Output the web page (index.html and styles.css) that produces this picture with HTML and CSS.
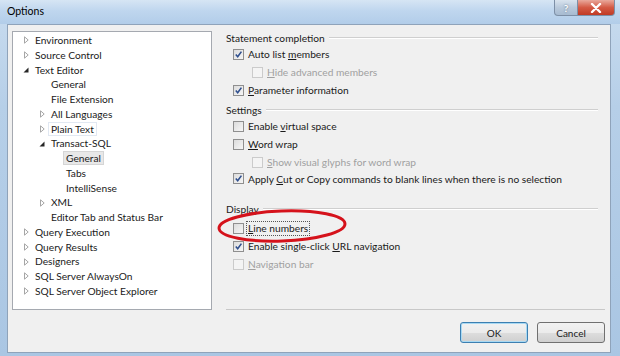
FILE: index.html
```html
<!DOCTYPE html>
<html>
<head>
    <title>Options</title>
    <link rel="stylesheet" href="styles.css">
</head>
<body>
<div class="window">
    <div class="titlebar">
        <span class="title">Options</span>
        <div class="caption-buttons">
            <span class="cap-btn help">?</span>
            <span class="cap-btn close">
                <svg width="12" height="10" viewBox="0 0 12 10"><path d="M2 1 L10 9 M10 1 L2 9" stroke="#fff" stroke-width="2.4" stroke-linecap="round"/></svg>
            </span>
        </div>
    </div>

    <div class="client">
        <div class="tree">
            <div class="node lv0"><span class="tw closed"></span>Environment</div>
            <div class="node lv0"><span class="tw closed"></span>Source Control</div>
            <div class="node lv0"><span class="tw open"></span>Text Editor</div>
            <div class="node lv1"><span class="tw"></span>General</div>
            <div class="node lv1"><span class="tw"></span>File Extension</div>
            <div class="node lv1"><span class="tw closed"></span>All Languages</div>
            <div class="node lv1"><span class="tw closed"></span><span class="label hover">Plain Text</span></div>
            <div class="node lv1"><span class="tw open"></span>Transact-SQL</div>
            <div class="node lv2"><span class="tw"></span><span class="label selected">General</span></div>
            <div class="node lv2"><span class="tw"></span>Tabs</div>
            <div class="node lv2"><span class="tw"></span>IntelliSense</div>
            <div class="node lv1"><span class="tw closed"></span>XML</div>
            <div class="node lv1"><span class="tw"></span>Editor Tab and Status Bar</div>
            <div class="node lv0"><span class="tw closed"></span>Query Execution</div>
            <div class="node lv0"><span class="tw closed"></span>Query Results</div>
            <div class="node lv0"><span class="tw closed"></span>Designers</div>
            <div class="node lv0"><span class="tw closed"></span>SQL Server AlwaysOn</div>
            <div class="node lv0"><span class="tw closed"></span>SQL Server Object Explorer</div>
        </div>

        <div class="panel">
            <div class="group-head">Statement completion</div>
            <div class="check on"><span>Auto list <u>m</u>embers</span></div>
            <div class="check sub disabled"><span><u>H</u>ide advanced members</span></div>
            <div class="check on"><span><u>P</u>arameter information</span></div>

            <div class="group-head second">Settings</div>
            <div class="check"><span>Enable <u>v</u>irtual space</span></div>
            <div class="check"><span><u>W</u>ord wrap</span></div>
            <div class="check sub disabled"><span><u>S</u>how visual glyphs for word wrap</span></div>
            <div class="check on tight"><span>Apply <u>C</u>ut or Copy commands to blank lines when there is no selection</span></div>

            <div class="group-head third">Display</div>
            <div class="check"><span class="focus"><u>L</u>ine numbers</span></div>
            <div class="check on"><span>Enable single-click <u>U</u>RL navigation</span></div>
            <div class="check disabled"><span><u>N</u>avigation bar</span></div>

            <svg class="mark" width="140" height="42" viewBox="0 0 140 42">
                <ellipse cx="69" cy="20" rx="63" ry="15" transform="rotate(-2 69 20)" fill="none" stroke="#d5121b" stroke-width="3"/>
            </svg>
        </div>

        <div class="footer">
            <button class="btn default">OK</button>
            <button class="btn">Cancel</button>
        </div>
    </div>
</div>
</body>
</html>
```

FILE: styles.css
```css
body {
    margin: 0;
    font-family: Lato, "Noto Sans", sans-serif;
    font-size: 10.2px;
    color: #1a1a1a;
}
.window {
    width: 620px;
    height: 356px;
    background: linear-gradient(180deg, #c9dcef 0%, #b6cfe8 30%, #aac6e3 100%);
    box-sizing: border-box;
    display: flex;
    flex-direction: column;
    overflow: hidden;
}
.titlebar {
    height: 24px;
    display: flex;
    justify-content: space-between;
    align-items: flex-start;
    background: linear-gradient(180deg, #d6e5f4 0%, #bfd6ee 45%, #b2cde9 100%);
}
.title {
    margin: 5px 0 0 7px;
    font-size: 10.5px;
    color: #000;
}
.caption-buttons {
    display: flex;
    margin-right: 5px;
}
.cap-btn {
    height: 16px;
    display: flex;
    align-items: center;
    justify-content: center;
    border: 1px solid #7d8fa6;
    border-top: none;
    box-sizing: border-box;
}
.help {
    width: 24px;
    border-radius: 0 0 0 4px;
    background: linear-gradient(180deg, #d9e3ee 0%, #b9c9db 50%, #a7bbd1 100%);
    color: #fff;
    font-size: 10px;
    font-weight: bold;
    text-shadow: 0 0 2px #54677e;
}
.close {
    width: 37px;
    border-left: none;
    border-radius: 0 0 4px 0;
    background: linear-gradient(180deg, #e9a99c 0%, #d45a45 50%, #c03a24 100%);
}
.client {
    margin: 0 9px 3px 7px;
    flex: 1;
    background: #f0f0f0;
    border: 1px solid #8fa3ba;
    box-sizing: border-box;
    display: grid;
    grid-template-columns: 200px 1fr;
    grid-template-rows: 279px 21px;
    column-gap: 14px;
    row-gap: 12px;
    padding: 6px 5px 9px 4px;
}
.tree {
    background: #fff;
    border: 1px solid #a5a9b0;
    box-sizing: border-box;
    padding-top: 1px;
}
.node {
    height: 14.75px;
    line-height: 14.75px;
    display: flex;
    align-items: center;
    white-space: nowrap;
}
.lv0 { padding-left: 10px; }
.lv1 { padding-left: 26px; }
.lv2 { padding-left: 41px; }
.tw {
    width: 11px;
    height: 8px;
    flex: none;
    margin-right: 1px;
}
.tw.closed {
    background: url("data:image/svg+xml,%3Csvg xmlns='http://www.w3.org/2000/svg' width='11' height='8'%3E%3Cpath d='M1.5 0.8 L5.2 4 L1.5 7.2 Z' fill='none' stroke='%23a6a6a6' stroke-width='1'/%3E%3C/svg%3E") no-repeat;
}
.tw.open {
    background: url("data:image/svg+xml,%3Csvg xmlns='http://www.w3.org/2000/svg' width='11' height='8'%3E%3Cpath d='M5.5 1.5 L5.5 6.5 L0.5 6.5 Z' fill='%23262626'/%3E%3C/svg%3E") no-repeat;
}
.label {
    padding: 0 2px;
    margin-left: -3px;
    line-height: 12px;
    border: 1px solid transparent;
}
.label.hover {
    border-color: #e1e8f2;
}
.label.selected {
    background: #e8e8e8;
    border-color: #d5d5d5;
}
.panel {
    position: relative;
    border-bottom: 1px solid #c8c8c8;
    box-sizing: border-box;
    padding-right: 7px;
}
.group-head {
    height: 14px;
    line-height: 14px;
    display: flex;
    align-items: center;
    white-space: nowrap;
}
.group-head::after {
    content: "";
    flex: 1;
    height: 1px;
    background: #cfcfcf;
    margin-left: 4px;
    border-bottom: 1px solid #fff;
}
.group-head.second { margin-top: 4px; }
.group-head.third { margin-top: 16px; margin-bottom: 3px; }
.check {
    height: 18px;
    display: flex;
    align-items: center;
    padding-left: 7px;
    white-space: nowrap;
}
.check.tight { height: 15px; }
.check::before {
    content: "";
    width: 11px;
    height: 11px;
    flex: none;
    box-sizing: border-box;
    border: 1px solid #8f8f8f;
    background: linear-gradient(135deg, #dcdcdc 0%, #f6f6f6 100%);
    margin-right: 4px;
}
.check.on::before {
    background: url("data:image/svg+xml,%3Csvg xmlns='http://www.w3.org/2000/svg' width='9' height='9'%3E%3Cpath d='M1.8 4.6 L3.7 6.8 L7.4 1.6' fill='none' stroke='%232f4f8e' stroke-width='1.6'/%3E%3C/svg%3E") center no-repeat, linear-gradient(135deg, #dcdcdc 0%, #f6f6f6 100%);
}
.check.sub { padding-left: 26px; }
.check.disabled { color: #a0a0a0; }
.check.disabled::before {
    border-color: #cbcbcb;
    background: #f4f4f4;
}
.focus {
    border: 1px dotted #555;
    padding: 0 1px;
    margin-left: -2px;
    line-height: 13px;
}
.mark {
    position: absolute;
    left: -13px;
    top: 175px;
}
.footer {
    grid-column: 1 / 3;
    display: flex;
    justify-content: flex-end;
    gap: 9px;
}
.btn {
    width: 68px;
    height: 21px;
    font-family: inherit;
    font-size: 10px;
    color: #1a1a1a;
    border: 1px solid #707070;
    border-radius: 3px;
    background: linear-gradient(180deg, #f2f2f2 0%, #ebebeb 50%, #dddddd 51%, #cfcfcf 100%);
    padding: 0;
}
.btn.default {
    border-color: #3c7fb1;
    box-shadow: inset 0 0 0 1px #a8d9f3;
}
```
